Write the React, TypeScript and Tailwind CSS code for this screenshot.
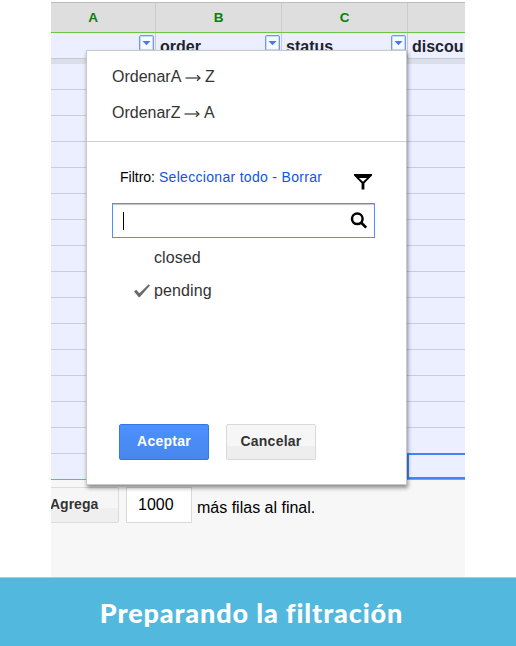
import React from "react";

const rows = Array.from({ length: 16 }, (_, i) => i);

function FilterToggle() {
  return (
    <span className="mt-[2px] mr-px flex h-[16px] w-[15px] shrink-0 items-center justify-center rounded-[2px] border border-[#7397f2] bg-[#f7faff] shadow-[inset_0_0_0_1px_#c8d8fb]">
      <svg width="9" height="5" viewBox="0 0 9 5">
        <path d="M0.5 0H8.5L4.5 4.2Z" fill="#4a79ee" />
      </svg>
    </span>
  );
}

function Column({ letter, title, width, filter, active }: {
  letter: string;
  title: string;
  width: string;
  filter?: boolean;
  active?: boolean;
}) {
  const edge = filter ? "border-r border-r-[#c9cbd0]" : "";
  return (
    <div className={`flex shrink-0 flex-col ${width}`}>
      <div className={`h-[29px] bg-[#dedede] text-center text-[13.5px] leading-[29px] font-bold text-[#0a7f0a] ${edge}`}>
        {letter}
      </div>
      <div className="h-px bg-[#6cc644]" />
      <div className={`flex h-[26px] justify-between overflow-hidden border-b border-b-[#c6cbdc] bg-[#ebefff] pl-[4px] ${edge}`}>
        <span className="text-[16px] leading-[27px] font-bold whitespace-nowrap text-[#1f232c]">{title}</span>
        {filter && <FilterToggle />}
      </div>
      <div className="h-[5px] bg-[#dadee9]" />
      {rows.map((r) => (
        <div
          key={r}
          className={
            r === 15
              ? "h-[26px] border-b border-b-[#6cc644] bg-[#ebefff]"
              : "h-[26px] border-b border-b-[#c9cddd] bg-[#ebefff]"
          }
        >
          {r === 15 && active && (
            <div className="relative -top-px -left-px h-[26px] w-[70px] border-2 border-[#4285f4]" />
          )}
        </div>
      ))}
    </div>
  );
}

function FilterMenu() {
  return (
    <div className="absolute top-[50px] left-[86px] flex h-[435px] w-[321px] flex-col border border-[#c8c8c8] bg-white text-[#333] shadow-[1px_3px_4px_rgba(0,0,0,0.42)]">
      <div className="flex h-[91px] shrink-0 flex-col border-b border-[#cfcfcf] pt-[8px] pl-[25px] text-[16px] leading-[36px]">
        <div className="flex items-center whitespace-nowrap">
          <span>OrdenarA</span>
          <Arrow />
          <span>Z</span>
        </div>
        <div className="flex items-center whitespace-nowrap">
          <span>OrdenarZ</span>
          <Arrow />
          <span>A</span>
        </div>
      </div>
      <div className="flex h-[61px] shrink-0 items-start justify-between pt-[25px] pr-[34px] pl-[33px]">
        <div className="text-[14px] leading-[20px] whitespace-nowrap text-black">
          Filtro: <span className="tracking-[0.31px] text-[#1155dd]">Seleccionar todo - Borrar</span>
        </div>
        <svg className="mt-[7px]" width="18" height="17" viewBox="0 0 18 17">
          <path d="M0 0H18V1.5L10.4 9.3V15.6H7.6V9.3L0 1.5Z" fill="#000" />
          <path d="M5 4H13L9 7.8Z" fill="#fff" />
        </svg>
      </div>
      <div className="ml-[25px] flex h-[35px] w-[263px] shrink-0 items-center justify-between border border-[#4d90fe] pr-[6px] pl-[10px] shadow-[inset_0_1px_1px_rgba(0,0,0,0.25)]">
        <span className="h-[18px] w-px bg-black" />
        <svg width="18" height="18" viewBox="0 0 18 18" fill="none" stroke="#000">
          <circle cx="7.3" cy="6.8" r="5.3" strokeWidth="2.5" />
          <path d="M11 10.5L16.2 15.6" strokeWidth="2.7" />
        </svg>
      </div>
      <div className="flex h-[186px] shrink-0 flex-col pt-[3px] pl-[47px] text-[16px] leading-[33px]">
        <div className="pl-[20px] tracking-[0.1px]">closed</div>
        <div className="flex items-center">
          <svg className="mr-[3px]" width="17" height="14" viewBox="0 0 17 14">
            <path d="M0 7.4L2.2 5.8L5.4 9.3L14.8 0.2L16 1.4L5.6 13.2H4.8Z" fill="#686868" />
          </svg>
          <span className="tracking-[0.1px]">pending</span>
        </div>
      </div>
      <div className="flex gap-[17px] pl-[32px] text-[14px] font-bold tracking-[0.25px]">
        <button className="h-[36px] w-[90px] rounded-[2px] border border-[#3079ed] bg-linear-to-b from-[#4d90fe] to-[#4787ed] pb-[2px] text-white">
          Aceptar
        </button>
        <button className="h-[36px] w-[90px] rounded-[2px] border border-[#d9d9d9] bg-[linear-gradient(#f6f6f6_0_62%,#eeeeee_62%)] pb-[2px] text-[#333]">
          Cancelar
        </button>
      </div>
    </div>
  );
}

function Arrow() {
  return (
    <svg className="mr-[3.5px] ml-[4px] mt-[1px]" width="16" height="8" viewBox="0 0 16 8" fill="none" stroke="#333" strokeWidth="1.2">
      <path d="M0.5 4H15" />
      <path d="M12 1.2L15 4L12 6.8" />
    </svg>
  );
}

export default function App() {
  return (
    <div className="flex h-[646px] w-[516px] flex-col overflow-hidden bg-white font-['Liberation_Sans',Arial,sans-serif]">
      <div className="relative h-[577px] shrink-0 pt-[2px]">
        <div className="ml-[51px] flex h-[575px] w-[414px] flex-col overflow-hidden border-t border-[#bdbdbd] bg-[#f7f7f7]">
          <div className="flex shrink-0">
            <Column letter="" title="" width="w-[105px]" filter />
            <Column letter="B" title="order" width="w-[126px]" filter />
            <Column letter="C" title="status" width="w-[126px]" filter />
            <Column letter="" title="discou" width="w-[57px]" active />
          </div>
          <div className="-mt-[477px] h-[29px] w-[84px] shrink-0 text-center text-[13.5px] leading-[29px] font-bold text-[#0a7f0a]">
            A
          </div>
          <div className="mt-[455px] flex shrink-0">
            <button className="-ml-[10px] h-[36px] w-[78px] shrink-0 rounded-[2px] border border-[#dcdcdc] bg-[linear-gradient(#f6f6f6_0_60%,#efefef_60%)] pb-[2px] pl-[8px] text-left text-[14px] font-bold text-[#333]">
              Agrega
            </button>
            <div className="ml-[7px] h-[36px] w-[66px] border border-[#d9d9d9] bg-white pl-[11px] text-[16px] leading-[33px]">1000</div>
            <span className="ml-[5px] text-[16px] leading-[41px]">más filas al final.</span>
          </div>
        </div>
        <FilterMenu />
      </div>
      <div className="flex h-[69px] shrink-0 items-center justify-center border-t border-[#a9cbd8] bg-[#52b8dd] pt-[3px] pr-[13px] font-[Lato] text-[27px] font-black tracking-[0.86px] text-white">
        Preparando la filtración
      </div>
    </div>
  );
}
